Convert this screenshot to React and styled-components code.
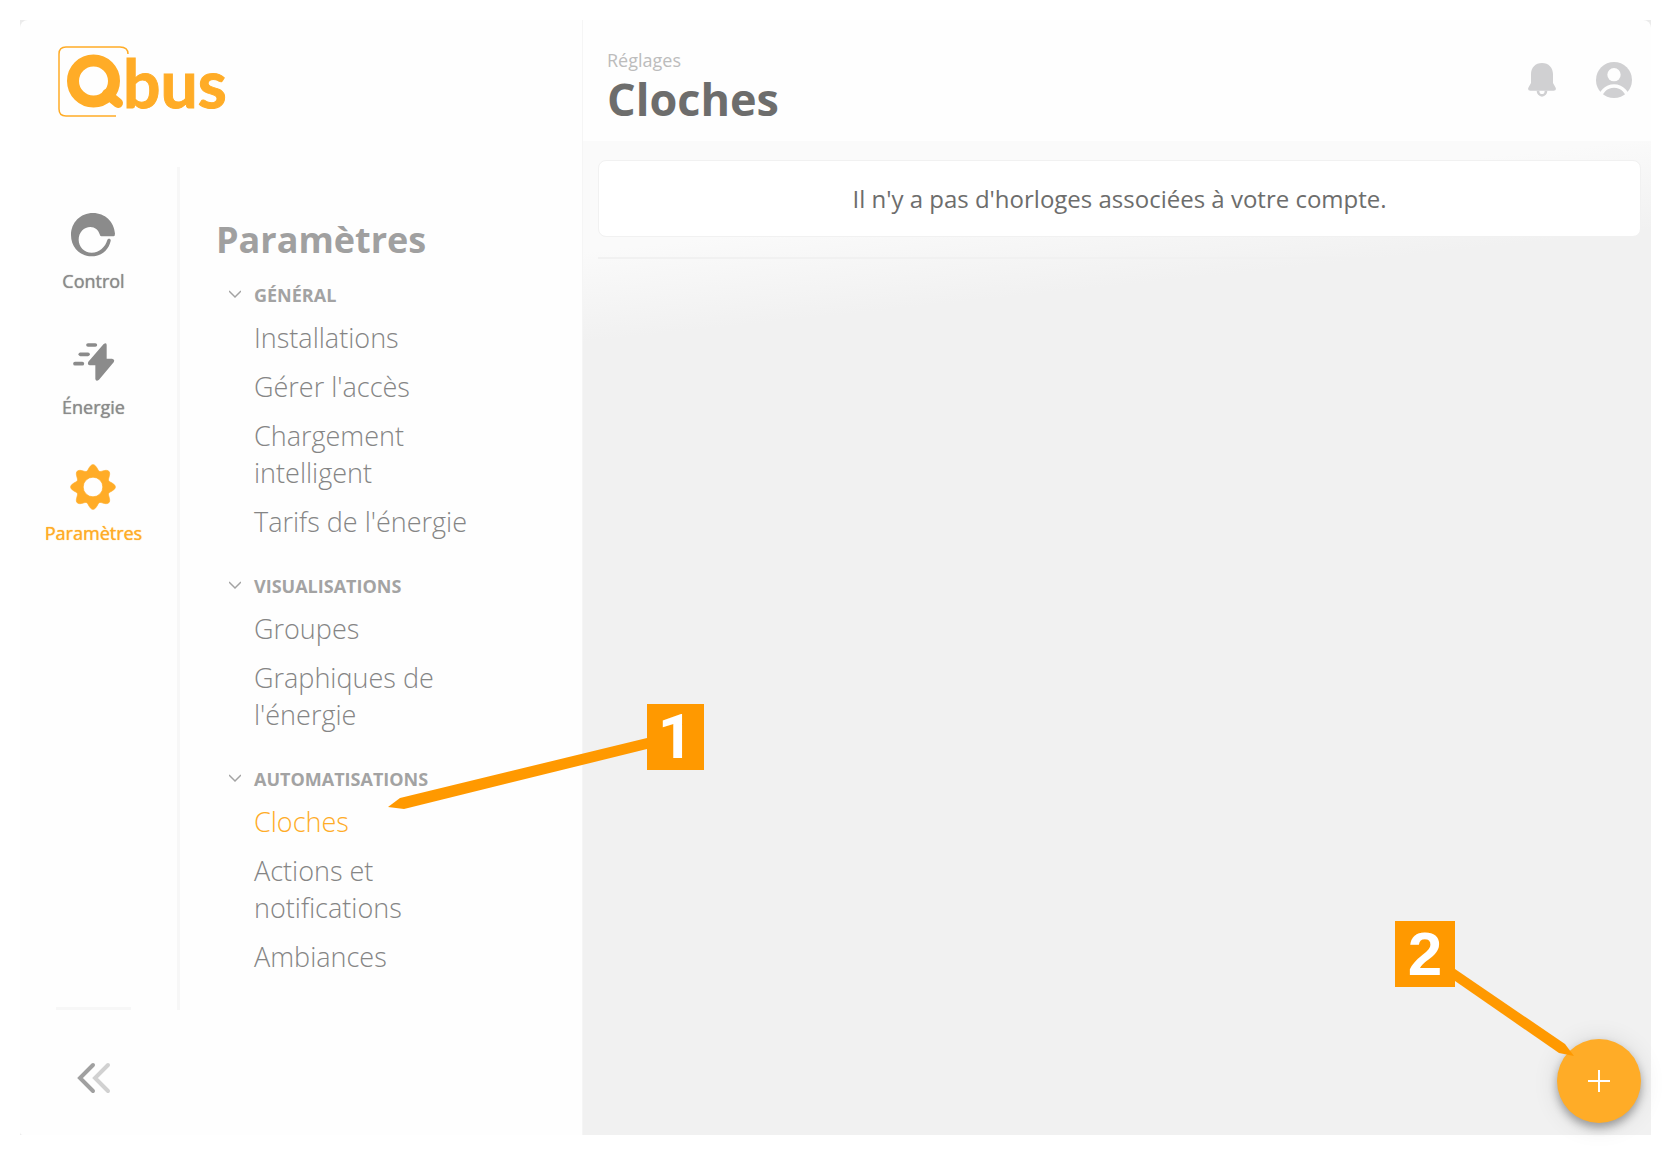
import React, { useState } from 'react'
import styled, { createGlobalStyle, css } from 'styled-components';

const orange = "#ffac27";
const callout = "#ff9900";

const GlobalStyle = createGlobalStyle`
    * {
        box-sizing: border-box;
    }
    body {
        margin: 0;
        background: #ffffff;
        font-family: "Open Sans", "Noto Sans", sans-serif;
    }
    button {
        padding: 0;
        border: 0;
        background: none;
        font: inherit;
        cursor: pointer;
    }
    h1, h2, p, ul {
        margin: 0;
        padding: 0;
    }
    a {
        text-decoration: none;
    }
    svg {
        display: block;
    }
`;

const Page = styled.div`
    min-height: 100vh;
    padding: 20px;
    display: flex;
`;

const Shell = styled.div`
    flex: 1;
    display: flex;
    position: relative;
    background: #ebebeb;
`;

const Sidebar = styled.aside`
    width: 562px;
    flex-shrink: 0;
    display: flex;
    flex-direction: column;
    background: #fefefe;
    border-radius: 8px 0 0 3px;
`;

const Brand = styled.a`
    height: 147px;
    padding: 6px 38px;
`;

const SideBody = styled.div`
    flex: 1;
    display: flex;
`;

const Rail = styled.nav`
    width: 160px;
    padding: 45px 10px 0 0;
    border-right: 3px solid #f7f7f7;
    display: flex;
    flex-direction: column;
    align-items: center;
    gap: 45px;
`;

const RailLink = styled.a`
    display: flex;
    flex-direction: column;
    align-items: center;
    gap: 11px;
    font-size: 18px;
    line-height: 24px;
    text-shadow: 0 0 1px currentColor;
    color: ${props => props.$active ? orange : "#8b8b8b"};
`;

const RailIcon = styled.span`
    height: 46px;
    display: flex;
    align-items: center;
`;

const RailEnd = styled.div`
    width: 75px;
    height: 3px;
    margin-top: auto;
    background: #f7f7f7;
`;

const SideFooter = styled.div`
    height: 125px;
    width: 148px;
    display: flex;
    align-items: center;
    justify-content: center;
    padding-top: 11px;
`;

const Panel = styled.div`
    flex: 1;
    padding: 49px 36px 24px;
`;

const PanelTitle = styled.h2`
    font-size: 36px;
    line-height: 48px;
    font-weight: 700;
    color: #a0a0a0;
`;

const Sections = styled.div`
    display: flex;
    flex-direction: column;
    gap: 34px;
    padding: 19px 0 0 13px;
`;

const SectionButton = styled.button`
    display: flex;
    align-items: center;
    gap: 13px;
    font-size: 18px;
    line-height: 24px;
    font-weight: 700;
    text-transform: uppercase;
    color: #a3a3a3;
`;

const SectionList = styled.ul`
    display: flex;
    flex-direction: column;
    gap: 12px;
    width: 255px;
    padding: 12px 0 0 25px;
    list-style: none;
`;

const SectionLink = styled.a`
    display: block;
    font-size: 27px;
    line-height: 37px;
    font-weight: 300;
    color: ${props => props.$active ? orange : "#858585"};
`;

const Main = styled.main`
    flex: 1;
    display: flex;
    flex-direction: column;
    border-left: 1px solid #f5f5f5;
`;

const Header = styled.header`
    height: 121px;
    padding: 28px 19px 13px 24px;
    display: flex;
    justify-content: space-between;
    background: #fefefe;
    border-radius: 0 8px 0 0;
`;

const Crumb = styled.p`
    font-size: 18px;
    line-height: 24px;
    color: #bcbcbc;
`;

const Title = styled.h1`
    font-size: 45px;
    line-height: 54px;
    font-weight: 700;
    color: #6d6d6c;
`;

const HeaderActions = styled.div`
    height: 64px;
    display: flex;
    align-items: center;
    gap: 40px;
`;

const Content = styled.section`
    flex: 1;
    padding: 19px 10px 0 15px;
    background: linear-gradient(174deg, #fafafa 110px, #f1f1f1 200px);
`;

const EmptyCard = styled.div`
    padding: 22px 16px 21px;
    border: 1px solid #f1f1f1;
    border-radius: 8px;
    background: #ffffff;
    text-align: center;
    font-size: 24px;
    line-height: 32px;
    color: #6d6d6c;
`;

const Divider = styled.hr`
    height: 2px;
    margin: 20px 0 0;
    border: 0;
    background: #f1f1f1;
`;

const AddButton = styled.button`
    position: absolute;
    right: 10px;
    bottom: 12px;
    width: 84px;
    height: 84px;
    border-radius: 50%;
    display: flex;
    align-items: center;
    justify-content: center;
    background: ${orange};
    box-shadow: 0 5px 8px rgba(0, 0, 0, 0.3), 0 2px 26px rgba(0, 0, 0, 0.12);
`;

const Callout = styled.div`
    position: absolute;
    height: 66px;
    display: flex;
    align-items: center;
    justify-content: center;
    background: ${callout};
    color: #ffffff;
    font-size: 62px;
    line-height: 66px;
    font-weight: 700;
    ${props => props.$step === 1 ? css`
        left: 627px;
        top: 684px;
        width: 57px;
        font-family: Roboto, sans-serif;
    ` : css`
        right: 196px;
        bottom: 148px;
        width: 60px;
        font-family: "Liberation Sans", sans-serif;
    `}
`;

const Arrow = styled.svg`
    position: absolute;
    ${props => props.$step === 1 ? css`
        right: 100%;
        top: 31px;
    ` : css`
        left: 100%;
        top: 46px;
    `}
`;

const Logo = () => (
    <svg width="180" height="110" viewBox="0 -20 180 110" role="img" aria-label="Qbus">
        <path d="M58 70H8Q1 70 1 63V8Q1 1 8 1H62Q70 1 70 8" fill="none" stroke={orange} strokeWidth="1.5" />
        <circle cx="35.500" cy="35" r="20.500" fill="none" stroke={orange} strokeWidth="12" />
        <path d="M49 48L60 57" stroke={orange} strokeWidth="10" strokeLinecap="round" />
        <text x="65" y="62" fontFamily="Lato, sans-serif" fontWeight="700" fontSize="66" stroke={orange} fill={orange}>bus</text>
    </svg>
);

const ControlIcon = () => (
    <svg width="44" height="44" viewBox="0 0 132 132">
        <path
            fill="currentColor"
            d="M132 62C129 26 102 0 66 0C28 0 0 29 0 66C0 103 27 130 62 130C91 130 113 111 119 84C121 76 111 75 109 81C103 102 85 119 62 119C40 119 23 101 23 80C23 58 39 42 58 42C72 42 82 51 86 64Q87 70 91 70H127Q132 70 132 62Z"
        />
    </svg>
);

const EnergyIcon = () => (
    <svg width="42" height="40" viewBox="0 -6 126 120">
        <g stroke="currentColor" strokeWidth="11" strokeLinecap="round">
            <path d="M45 6H67" />
            <path d="M22 34H45" />
            <path d="M6 62H28" />
        </g>
        <path
            fill="currentColor"
            d="M92 3Q101 -3 101 6V47H117Q127 49 122 58L78 110Q69 117 67 108V67H50Q42 65 46 56Z"
        />
    </svg>
);

// eight soft teeth around the hub
const cogPath = Array.from({ length: 144 }, (_, i) => {
    const a = (i / 144) * Math.PI * 2;
    const r = 58 + 8 * Math.cos(8 * a);
    return `${i ? "L" : "M"}${(68 + r * Math.cos(a)).toFixed(1)} ${(68 + r * Math.sin(a)).toFixed(1)}`;
}).join("") + "Z";

const CogIcon = () => (
    <svg width="46" height="46" viewBox="0 0 136 136">
        <path
            fill="currentColor"
            fillRule="evenodd"
            stroke="currentColor"
            strokeWidth="2"
            strokeLinejoin="round"
            d={`${cogPath}M39 68a29 29 0 1 0 58 0a29 29 0 1 0 -58 0Z`}
        />
    </svg>
);

const BellIcon = () => (
    <svg width="28" height="34" viewBox="0 0 84 102">
        <path fill="#d0d0d2" d="M9 34C9 14 22 0 42 0C62 0 75 14 75 34V60L83 74Q86 83 77 83H7Q-2 83 1 74L9 60Z" />
        <path d="M30 83A12 14 0 0 0 54 83" fill="none" stroke="#d0d0d2" strokeWidth="8" />
    </svg>
);

const UserIcon = () => (
    <svg width="36" height="36" viewBox="0 0 108 108">
        <circle cx="54" cy="54" r="54" fill="#d0d0d2" />
        <circle cx="54" cy="38" r="20" fill="#fefefe" />
        <path d="M11 115A43 43 0 0 1 97 115" fill="none" stroke="#fefefe" strokeWidth="10" />
    </svg>
);

const ChevronIcon = ({ open }) => (
    <svg width="12" height="12" viewBox="0 0 12 12" fill="none" stroke="currentColor" strokeWidth="1.5">
        <path d={open ? "M0 2L6 8L12 2" : "M3 0L9 6L3 12"} />
    </svg>
);

const CollapseIcon = () => (
    <svg width="34" height="32" viewBox="0 0 34 32" fill="none" strokeWidth="4" strokeLinecap="round">
        <path d="M31 3L18 16L31 29" stroke="#d1d1d1" />
        <path d="M16 3L3 16L16 29" stroke="#a0a0a0" />
    </svg>
);

const PlusIcon = () => (
    <svg width="22" height="22" viewBox="0 0 22 22" stroke="#ffffff" strokeWidth="2">
        <path d="M11 0V22M0 11H22" />
    </svg>
);

const railItems = [
    { label: "Control", Icon: ControlIcon },
    { label: "Énergie", Icon: EnergyIcon },
    { label: "Paramètres", Icon: CogIcon, active: true },
];

const sections = [
    { title: "Général", items: ["Installations", "Gérer l'accès", "Chargement intelligent", "Tarifs de l'énergie"] },
    { title: "Visualisations", items: ["Groupes", "Graphiques de l'énergie"] },
    { title: "Automatisations", items: ["Cloches", "Actions et notifications", "Ambiances"] },
];

const Section = ({ title, items }) => {
    const [open, setOpen] = useState(true);

    return (
        <div>
            <SectionButton type="button" aria-expanded={open} onClick={() => setOpen(!open)}>
                <ChevronIcon open={open} />
                {title}
            </SectionButton>
            {open &&
                <SectionList>
                    {items.map(item => (
                        <li key={item}>
                            <SectionLink href="#" $active={item === "Cloches"}>{item}</SectionLink>
                        </li>
                    ))}
                </SectionList>}
        </div>
    )
}

const App = () => {
    return (
        <>
            <GlobalStyle />
            <Page>
                <Shell>
                    <Sidebar>
                        <Brand href="#"><Logo /></Brand>
                        <SideBody>
                            <Rail>
                                {railItems.map(({ label, Icon, active }) => (
                                    <RailLink href="#" key={label} $active={active}>
                                        <RailIcon><Icon /></RailIcon>
                                        {label}
                                    </RailLink>
                                ))}
                                <RailEnd />
                            </Rail>
                            <Panel>
                                <PanelTitle>Paramètres</PanelTitle>
                                <Sections>
                                    {sections.map(section => <Section key={section.title} {...section} />)}
                                </Sections>
                            </Panel>
                        </SideBody>
                        <SideFooter>
                            <button type="button" aria-label="Réduire le menu"><CollapseIcon /></button>
                        </SideFooter>
                    </Sidebar>
                    <Main>
                        <Header>
                            <div>
                                <Crumb>Réglages</Crumb>
                                <Title>Cloches</Title>
                            </div>
                            <HeaderActions>
                                <button type="button" aria-label="Notifications"><BellIcon /></button>
                                <button type="button" aria-label="Compte"><UserIcon /></button>
                            </HeaderActions>
                        </Header>
                        <Content>
                            <EmptyCard>Il n'y a pas d'horloges associées à votre compte.</EmptyCard>
                            <Divider />
                        </Content>
                    </Main>
                    <AddButton type="button" aria-label="Ajouter"><PlusIcon /></AddButton>
                    <Callout $step={1}>
                        1
                        <Arrow $step={1} width="259" height="76" viewBox="0 0 259 76">
                            <path d="M259 3V14L16 74L0 72L12 63Z" fill={callout} />
                        </Arrow>
                    </Callout>
                    <Callout $step={2}>
                        2
                        <Arrow $step={2} width="119" height="90" viewBox="0 0 119 90">
                            <path d="M0 2V14L104 86L119 89L110 77Z" fill={callout} />
                        </Arrow>
                    </Callout>
                </Shell>
            </Page>
        </>
    )
}

export default App;
